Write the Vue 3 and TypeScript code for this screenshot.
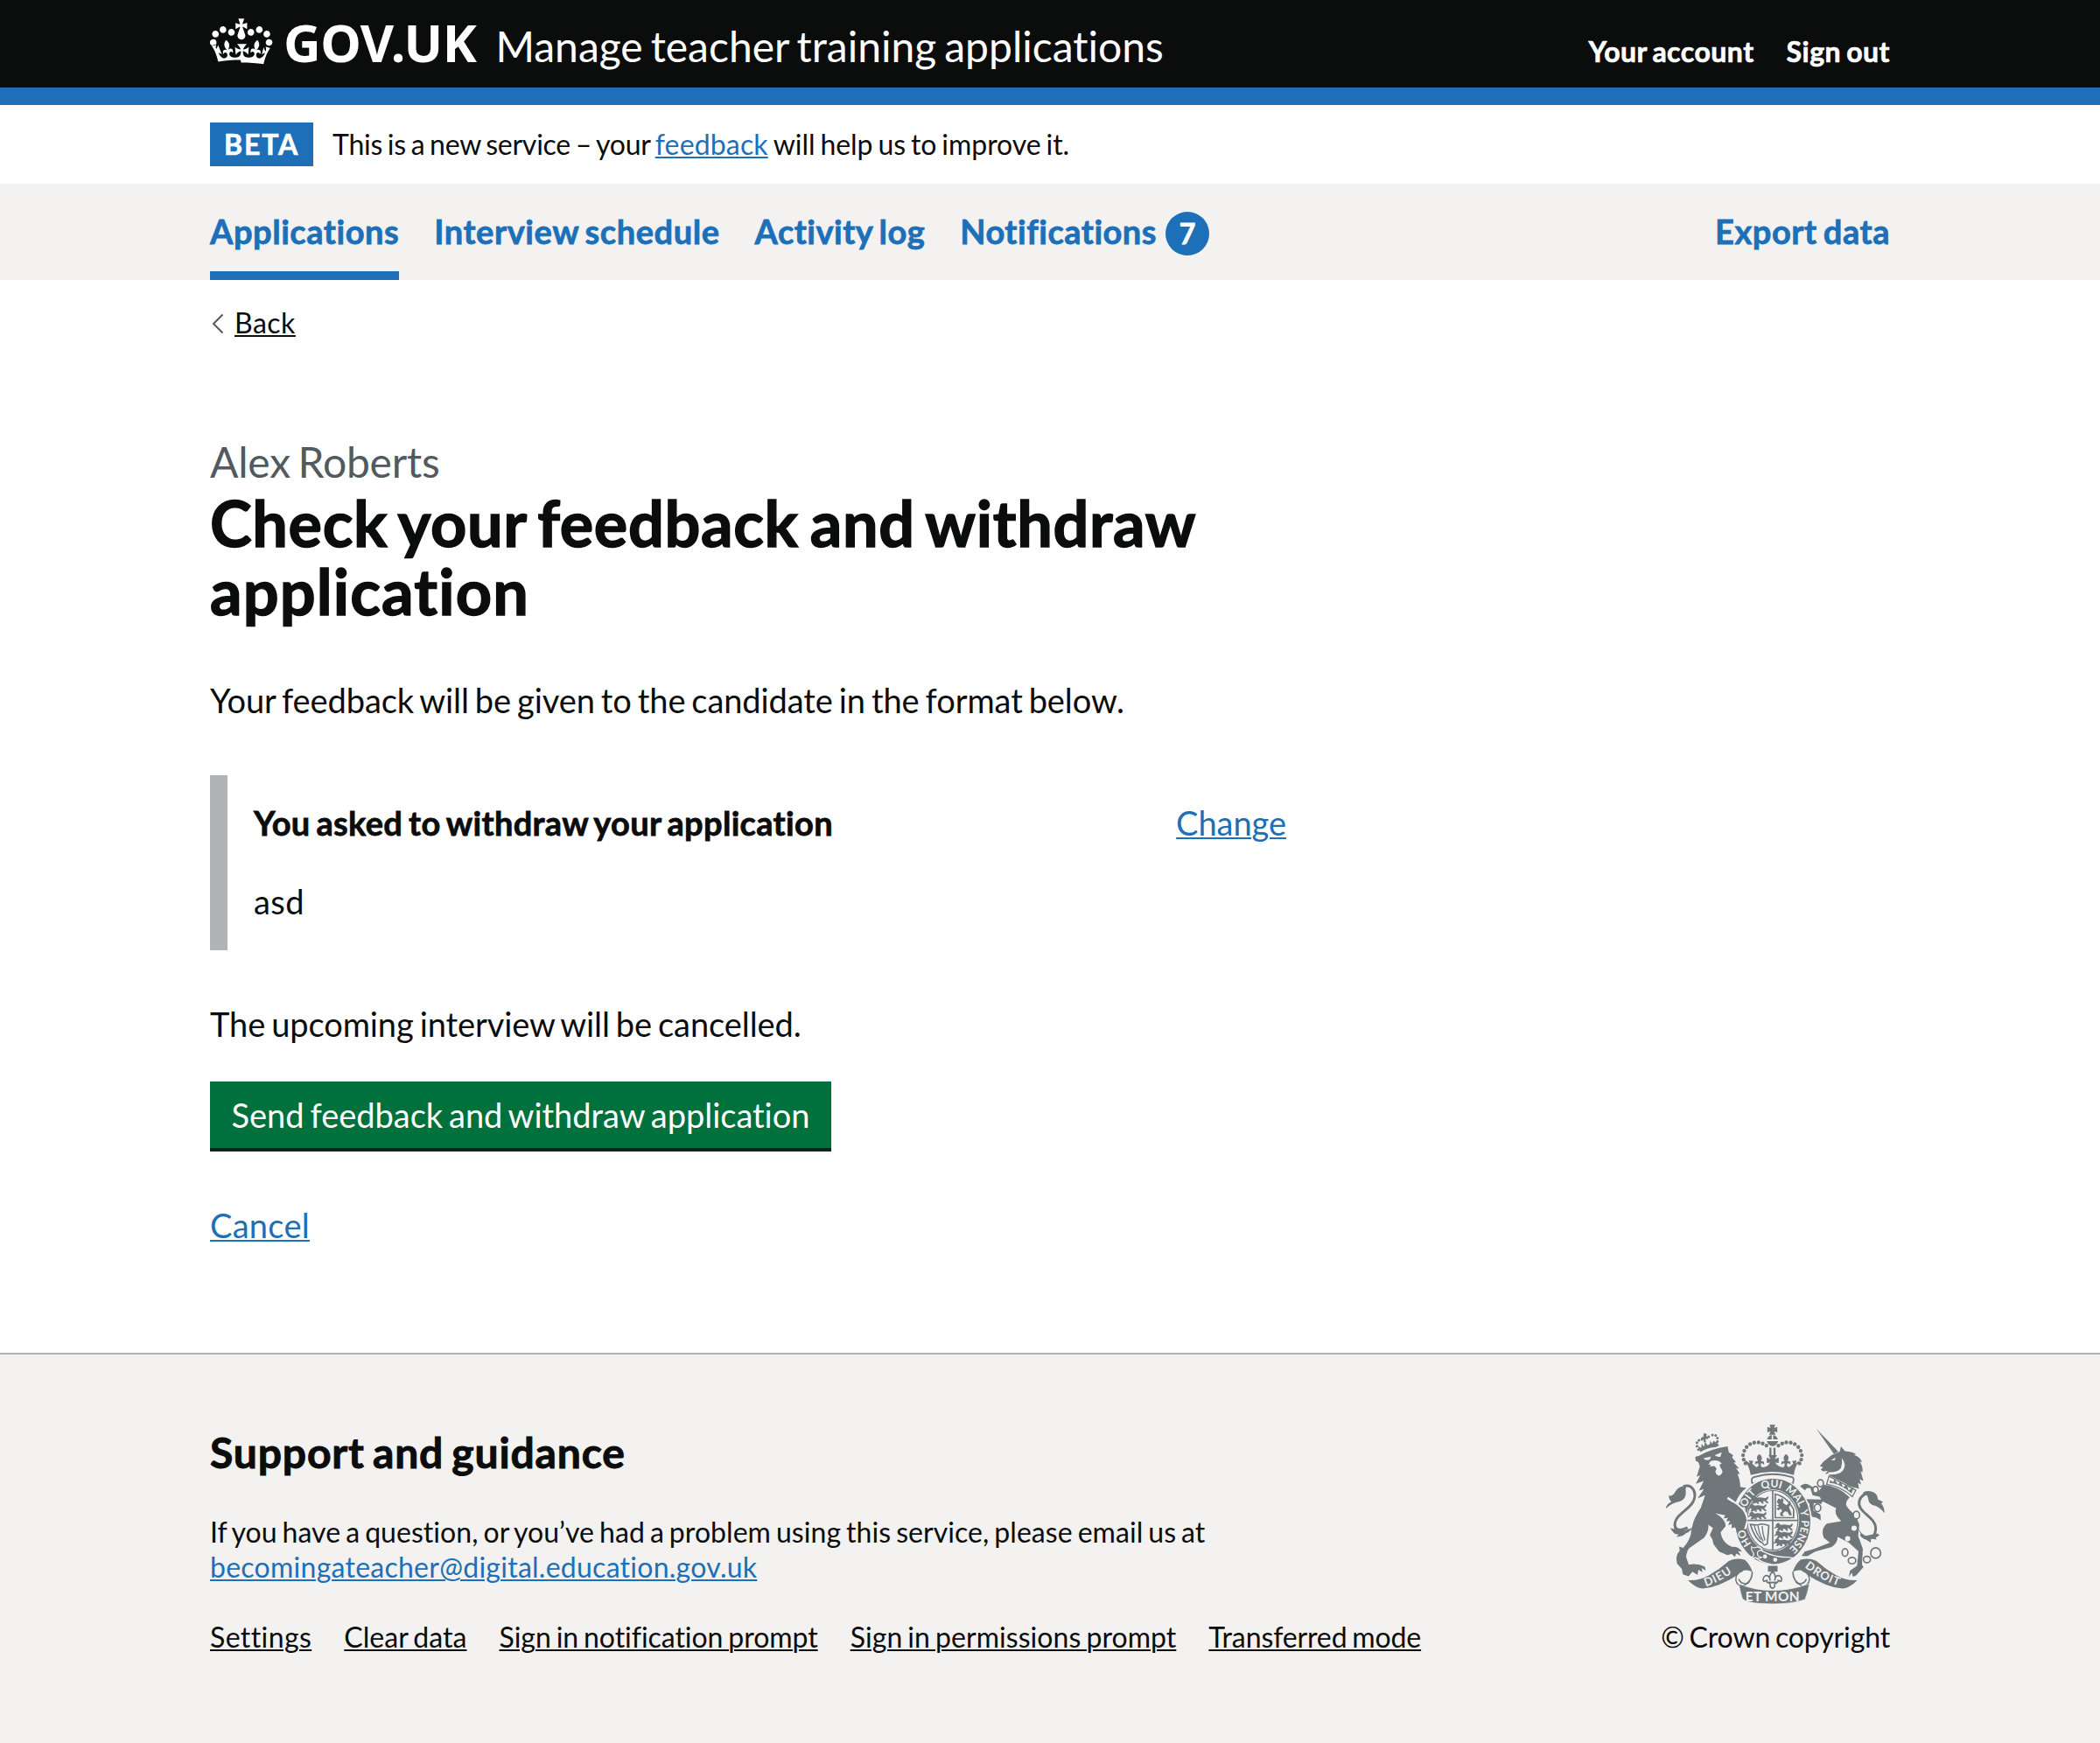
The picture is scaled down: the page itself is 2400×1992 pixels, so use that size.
<script setup lang="ts">
interface NavItem {
  label: string
  cls: string
  current?: boolean
  count?: number
}

const navItems: NavItem[] = [
  { label: 'Applications', cls: 'nav-applications', current: true },
  { label: 'Interview schedule', cls: 'nav-interviews' },
  { label: 'Activity log', cls: 'nav-activity' },
  { label: 'Notifications', cls: 'nav-notifications', count: 7 },
]

const footerLinks = [
  { label: 'Settings', cls: 'fl-settings' },
  { label: 'Clear data', cls: 'fl-clear' },
  { label: 'Sign in notification prompt', cls: 'fl-notification' },
  { label: 'Sign in permissions prompt', cls: 'fl-permissions' },
  { label: 'Transferred mode', cls: 'fl-transferred' },
]

// Pearls on the left arch of the royal crown; the right arch mirrors them.
const pearls: [number, number][] = [
  [345, 216], [339, 203], [337, 188], [341, 173], [349, 160], [361, 150], [375, 145], [390, 144], [404, 148], [417, 155],
]
const smallPearls: [number, number][] = [
  [184, 169], [179, 157], [179, 145], [186, 137], [196, 134], [219, 125], [232, 119], [243, 120], [249, 129], [249, 141], [249, 153],
]
const chain: [number, number, number, number][] = [
  [602, 284, 10, 12], [585, 306, 9, 11], [592, 368, 11, 13], [725, 393, 11, 13], [686, 521, 10, 13],
  [710, 549, 13, 11], [761, 545, 12, 11], [791, 523, 17, 18],
]
const lions: [number, number][] = [
  [364, 326], [357, 353], [357, 380], [447, 419], [447, 445], [444, 471],
]
</script>

<template>
  <div class="page">
    <header class="header">
      <div class="container header-row">
        <svg class="crown" viewBox="0 0 36 32" aria-hidden="true">
          <path
            fill="#fff"
            fill-rule="evenodd"
            d="M6.7 12.2c1 .4 2.1-.1 2.5-1s-.1-2.1-1-2.5c-1-.4-2.1.1-2.5 1-.4 1 0 2.1 1 2.5m-4.3 2.5c1 .4 2.1-.1 2.5-1s-.1-2.1-1-2.5c-1-.4-2.1.1-2.5 1-.5 1 0 2.1 1 2.5m-1.3 4.8c1 .4 2.1-.1 2.5-1 .4-1-.1-2.1-1-2.5-1-.4-2.1.1-2.5 1-.4 1 0 2.1 1 2.5m10.4-5.8c1 .4 2.1-.1 2.5-1s-.1-2.1-1-2.5c-1-.4-2.1.1-2.5 1s0 2.1 1 2.5m17.4-1.5c-1 .4-2.1-.1-2.5-1s.1-2.1 1-2.5c1-.4 2.1.1 2.5 1 .5 1 0 2.1-1 2.5m4.3 2.5c-1 .4-2.1-.1-2.5-1s.1-2.1 1-2.5c1-.4 2.1.1 2.5 1 .5 1 0 2.1-1 2.5m1.3 4.8c-1 .4-2.1-.1-2.5-1-.4-1 .1-2.1 1-2.5 1-.4 2.1.1 2.5 1 .4 1 0 2.1-1 2.5m-10.4-5.8c-1 .4-2.1-.1-2.5-1s.1-2.1 1-2.5c1-.4 2.1.1 2.5 1s0 2.1-1 2.5m-5.3-4.9l2.4 1.3V6.5l-2.4.8c-.1-.1-.1-.2-.2-.2s1-3 1-3h-3.4l1 3c-.1.1-.2.1-.2.2-.1.1-2.4-.7-2.4-.7v3.5L17 8.800c.1.1.1.2.2.3l-1.4 4.2c-.1.2-.1.4-.1.6 0 1.1.8 2 1.9 2.2h.7c1-.2 1.9-1.1 1.9-2.1 0-.2 0-.4-.1-.6l-1.4-4.2c-.1-.2 0-.2.1-.3m-1 20.3c4.6 0 8.9.3 12.8.9 1.1-4.6 2.4-7.2 3.8-9.1l-2.6-.9c.3 1.3.3 1.9 0 2.8-.4-.4-.8-1.2-1.1-2.4l-1.2 4.2c.8-.5 1.4-.9 2-.9-1.2 2.6-2.7 3.2-3.6 3-1.2-.2-1.7-1.3-1.5-2.2.3-1.3 1.6-1.6 2.2-.1 1.2-2.4-.8-3.1-2.1-2.4 1.9-1.9 2.2-3.6.6-5.7-2.2 1.7-2.2 3.3-1.2 5.6-1.3-1.5-3.3-.7-2.5 1.7.9-1.4 2.1-.5 2 .8-.2 1.2-1.7 2.1-3.6 1.9-2.8-.2-3-2.2-3-3.7.7-.1 1.9.5 3 2l.4-4.4c-1.1 1.2-2.2 1.4-3.3 1.4.4-1.2 2.1-3.1 2.1-3.1h-5.5s1.8 2 2.1 3.1c-1.1 0-2.2-.2-3.3-1.4l.4 4.4c1.1-1.5 2.3-2.1 3-2-.1 1.6-.2 3.5-3 3.7-1.9.2-3.5-.7-3.6-1.9-.2-1.3 1-2.2 1.9-.8.7-2.4-1.3-3.1-2.6-1.7 1-2.3.9-4-1.2-5.6-1.6 2.1-1.3 3.8.6 5.7-1.3-.7-3.2 0-2.1 2.4.6-1.5 1.9-1.1 2.2.1.2.9-.3 1.9-1.5 2.2-.9.2-2.4-.5-3.5-3 .6 0 1.2.3 2 .9L4.6 19.2c-.3 1.1-.7 1.9-1.1 2.3-.3-.8-.2-1.5 0-2.8l-2.6.9c1.4 1.9 2.7 4.5 3.8 9.1 3.8-.6 8.2-.9 12.7-.9"
          />
        </svg>
        <span class="logotype">GOV.UK</span>
        <span class="service-name">Manage teacher training applications</span>
        <nav class="account-nav">
          <a class="account-link">Your account</a>
          <a class="account-link">Sign out</a>
        </nav>
      </div>
    </header>

    <div class="container phase-banner">
      <strong class="tag">BETA</strong>
      <span class="phase-lead">This is a new service – your</span>
      <a class="link phase-link">feedback</a>
      <span class="phase-tail">will help us to improve it.</span>
    </div>

    <nav class="primary-nav">
      <div class="container nav-row">
        <a
          v-for="item in navItems"
          :key="item.label"
          class="nav-item"
          :class="[item.cls, { current: item.current }]"
        >{{ item.label }}<span v-if="item.count" class="count">{{ item.count }}</span></a>
        <a class="nav-item nav-export">Export data</a>
      </div>
    </nav>

    <main class="container main">
      <a class="back-link">
        <svg class="chevron" viewBox="0 0 14 24" aria-hidden="true">
          <path d="M12.500 1.500 2 12l10.500 10.500" fill="none" stroke="#505a5f" stroke-width="2" />
        </svg>
        <span class="back-text">Back</span>
      </a>

      <span class="caption">Alex Roberts</span>
      <h1 class="heading">
        <span class="heading-first">Check your feedback and withdraw</span>
        <span class="heading-second">application</span>
      </h1>

      <p class="body intro">Your feedback will be given to the candidate in the format below.</p>

      <div class="inset">
        <div class="inset-text">
          <h2 class="inset-title">You asked to withdraw your application</h2>
          <p class="reason">asd</p>
        </div>
        <a class="link change">Change</a>
      </div>

      <p class="body upcoming">The upcoming interview will be cancelled.</p>
      <button class="button" type="button">Send feedback and withdraw application</button>
      <p class="cancel"><a class="link">Cancel</a></p>
    </main>

    <footer class="footer">
      <div class="container footer-row">
        <div class="footer-main">
          <h2 class="footer-title">Support and guidance</h2>
          <p class="footer-text">
            If you have a question, or you’ve had a problem using this service, please email us at<br />
            <a class="link email">becomingateacher@digital.education.gov.uk</a>
          </p>
          <div class="footer-links">
            <a v-for="l in footerLinks" :key="l.label" class="footer-link" :class="l.cls">{{ l.label }}</a>
          </div>
        </div>

        <div class="footer-crest">
          <svg class="crest" viewBox="70 80 755 620" aria-hidden="true">
            <defs>
              <path id="garter" d="M438 529C384 529 339 476 339 413S384 298 438 298 537 350 537 413 492 529 438 529" />
              <path id="dieu" d="M209 637Q264 621 330 568" />
              <path id="droit" d="M547 571Q612 622 676 639" />
              <path id="lion-passant" d="M2 6l6-4 5-1 3 5 6 2 8-2 12 2 8 1 7-6 4 2-4 8-5 4 9 7-6 3-9-8-5 1 3 7-6 1-5-7-8 1 3 6-6 1-4-5-7 4-6-1 5-8-6-2-5 4-3-3 6-5z" />
              <g id="scroll">
                <path d="M148 616Q186 619 222 598T288 550Q314 538 342 546 360 560 369 588 340 572 318 598 252 641 198 645 174 642 148 616z" />
                <path d="M333 640C340 632 370 622 368 587" fill="none" stroke="#6f777b" stroke-width="5" />
                <path d="M327 636C303 622 310 590 336 584M322 612C330 631 352 632 359 620" fill="none" stroke="#6f777b" stroke-width="4.500" />
              </g>
            </defs>

            <g fill="#6f777b">
              <!-- crown above the shield -->
              <path d="M428 84h19l-4 11 11-4v19l-11-4 5 12h-22l5-12-11 4V91l11 4z" />
              <path d="M419 134q4-13 16-15v15zM440 119q13 3 16 15h-16zM418 140h39q-4 16-19 17-15-1-20-17z" />
              <path d="M427 162h7v29h-7zM441 162h7v29h-7z" />
              <g v-for="(p, i) in pearls" :key="'p' + i">
                <circle :cx="p[0]" :cy="p[1]" r="6.500" />
                <circle :cx="875 - p[0]" :cy="p[1]" r="6.500" />
              </g>
              <path d="M346 206l14 10-3-10 15 2-4 9 14 12q12-2 6-13-7-2-9 5-5-14 9-13-9-15 5-24 14 11 5 24 15 0 10 13-5-8-10-4-2 14 10 12 14-2 21-16l-11 2v-19l13 6-7-14h29l-8 14 14-6v19l-12-2q8 14 22 16 12 2 10-12-5-4-10 4-5-13 10-13-9-13 5-24 14 9 5 24 14-1 9 13-2-7-9-5-6 11 6 13l14-12-4-9 15-2-3 10 14-10q-18 22-20 50-74-22-148 0-4-28-20-50z" />
              <path d="M378 262Q438 244 500 262 515 262 507 286 438 262 369 286 361 264 378 262z" fill="#f3f2f1" stroke="#6f777b" stroke-width="5.500" />

              <!-- lion and its crown -->
              <circle v-for="(p, i) in smallPearls" :key="'s' + i" :cx="p[0]" :cy="p[1]" r="4.500" />
              <path d="M202 113l11 2-2 8 6 2-1 8-8-1 2 11-7 1-2-10-7 2-1-8 8-3zM182 157l12 6 1-14 8 10 4-17 8 12 8-4 2-12 6 11 5-11 7 6 8-9-5 25q-33 2-55 17z" />
              <path d="M173 194L188 189Q232 165 284 158L288 178 303 188 299 196 313 212 305 213 324 234 313 232 326 252 318 252Q328 274 327 296L348 300Q324 318 312 348L334 374Q346 390 349 411L341 439 332 442 325 433 314 441 307 434 298 438 299 423 286 428 292 413 279 414 285 403 270 404 276 394 242 387Q278 407 277 431L260 452Q264 479 283 493L300 502Q324 501 333 519L320 516 329 532 313 525 309 537 298 526 283 530 255 518 236 493Q234 475 223 461L234 437 218 426Q220 449 203 471L156 504Q144 511 142 537L151 563Q181 557 206 570L209 583 195 574 198 589 184 580 181 598 164 587 150 603 131 596 127 577 111 559Q104 530 120 515L118 501 132 505Q159 475 160 443L165 423Q169 404 192 368L207 325 181 336 203 304 186 309 202 276 175 286 190 257 178 262 189 226 183 211 175 208z" />
              <path d="M201 198l26-5-4 10q-14 6-22-5zM240 188l24-10-5 16q-14 1-19-6zM221 212q13-10 34-3l9 7-8 5 4 10-5 2 5-2q10 12 4 20-10 14-20 0-4-10 3-16l-8-10-16 2 4-6-10-2 7-5z" fill="#f3f2f1" />
              <path d="M72 371Q75 355 91 348 83 338 82 326 95 331 106 311 117 292 142 294 139 305 141 317 141 337 122 346 92 352 72 371z" />
              <path d="M132 295C166 284 181 320 165 349S97 395 104 432Q110 453 147 436" fill="none" stroke="#6f777b" stroke-width="9" />
              <path d="M88 437l14 5-4-17 14 16q20 11 51-5-7 16-23 20-7 10-32 12 7-5 8-9-17 2-28-22z" />

              <!-- unicorn -->
              <path d="M588 98L663 176 648 184z" />
              <path d="M600 225L612 210 640 188 668 176 672 158 686 174Q714 176 724 185L717 187Q739 194 744 213L736 209Q750 232 745 248L739 242 749 276 736 270 741 288 730 283 734 303 724 300Q703 298 685 284L633 258 630 250 618 253 627 242 610 243 603 237 611 230z" />
              <path d="M675 198q18 22 4 42-12 16-48 14l-3-8q34 2 44-14 6-17 3-34z" fill="#f3f2f1" />
              <path d="M638 204l16-8-4 10z" fill="#f3f2f1" />
              <path d="M631 260l92 48-12 22q-40-36-88-42z" fill="#f3f2f1" stroke="#6f777b" stroke-width="4" />
              <path d="M635 273l10 8 5-11 12 19 9-11 8 20 13-10 6 20 18-10-8 21q-36-33-75-37z" />
              <path d="M532 294Q546 281 560 288L597 310 613 289Q661 293 702 332 688 345 690 359 699 376 721 392L735 425 731 465 747 508 744 562 749 571 724 600 713 604 709 590 699 606 703 583 727 567 732 517 699 487 661 468Q660 490 640 502L584 518 557 534 537 533 548 518 581 508 634 487Q624 480 613 470 602 440 624 422L673 414Q646 388 656 370L609 346 605 355 579 352 578 377 602 391 603 411 588 402 574 399 558 375 565 354 548 345 550 338 604 340 600 331 575 325 567 300 555 301 549 308z" />
              <path d="M740 459C754 482 791 478 791 438S724 383 735 344Q743 318 773 317" fill="none" stroke="#6f777b" stroke-width="9" />
              <path d="M746 317Q757 307 776 312 798 317 799 340L816 347 810 353Q822 368 821 386 808 369 789 361 767 358 765 336 763 321 746 317zM728 425Q736 456 756 464L797 456 804 463 791 470 794 477 775 474 774 487 759 478Q738 468 728 425z" />
              <circle cx="717" cy="438" r="9" fill="#f3f2f1" />
              <circle cx="695" cy="474" r="9" fill="#f3f2f1" />
              <ellipse
                v-for="(c, i) in chain"
                :key="'c' + i"
                :cx="c[0]"
                :cy="c[1]"
                :rx="c[2]"
                :ry="c[3]"
                :fill="i < 4 ? '#f3f2f1' : 'none'"
                stroke="#6f777b"
                stroke-width="5"
              />

              <!-- garter -->
              <ellipse cx="439" cy="415" rx="131" ry="149" fill="#6f777b" stroke="#f3f2f1" stroke-width="5" />
              <ellipse cx="438" cy="411" rx="91" ry="106" fill="#f3f2f1" />
              <ellipse cx="438" cy="411" rx="87" ry="102" fill="none" stroke="#6f777b" stroke-width="3.500" />
              <g class="garter-text">
                <text><textPath href="#garter" startOffset="12.500%">HO</textPath></text>
                <text><textPath href="#garter" startOffset="29%">SOIT</textPath></text>
                <text><textPath href="#garter" startOffset="44.500%">QUI</textPath></text>
                <text><textPath href="#garter" startOffset="56.500%">MAL</textPath></text>
                <text><textPath href="#garter" startOffset="69.500%">Y</textPath></text>
                <text><textPath href="#garter" startOffset="74.500%">PENSE</textPath></text>
              </g>

              <!-- the lion's forepaw rests over the garter -->
              <path d="M284 334Q316 354 336 374 350 390 351 411L343 441" fill="none" stroke="#f3f2f1" stroke-width="8" />
              <path d="M300 348Q318 358 334 374 346 390 349 411L341 439 332 442 325 433 314 441 307 434 298 438 299 423 290 400z" />

              <!-- quarters -->
              <path d="M436 309h5v204h-5zM351 409h175v5H351z" />
              <use v-for="(l, i) in lions" :key="'l' + i" href="#lion-passant" :x="l[0]" :y="l[1]" />
              <path d="M447 321q39 8 63 52v29h-63z" fill="none" stroke="#6f777b" stroke-width="5" />
              <path d="M458 336l8 4 5-6 5 9-3 8 12 8 10-8 1-9 5 12-7 12 6 14 4 14-9 0-6-12-9-2-9 9 7 7-12 1-3-10 8-8-6-8-7 6-7-6 9-5-8-6 8-4-8-7z" />
              <path d="M362 425q20 3 29 1 10-6 34 3l-5 62q-12 10-15-1-28-14-43-65z" fill="none" stroke="#6f777b" stroke-width="5" />
              <path d="M375 428q6 27 23 49M388 429q4 30 18 54M402 430q2 28 10 50" fill="none" stroke="#6f777b" stroke-width="4" />

              <!-- buckle and strap -->
              <path d="M376 506l18 5q40 26 96 26l20 3q-42 26-76 22-34-6-52-22l-9-2z" stroke="#f3f2f1" stroke-width="4" />
              <path d="M366 502q8 6 18 0 16 2 18 12-16-2-16 10t14 14q-12 6-22 0-6 4-10-2 8-4 4-14-8-8-6-20z" stroke="#f3f2f1" stroke-width="3.500" />
              <circle cx="412" cy="535" r="7" fill="#f3f2f1" />
              <circle cx="447" cy="546" r="7" fill="#f3f2f1" />
              <path d="M422 567h33v20h-33z" />
              <path d="M438 585q-15 16-8 32-3-20-17-16-12 8-5 19l10-3q-2 8 10 8l2 9q-2 7 8 10 9-3 7-10l2-9q11 0 10-8l10 3q6-12-5-19-15-4-17 16 7-16-7-32z" fill="#f3f2f1" stroke="#6f777b" stroke-width="5" />
              <path d="M423 621h30v6h-30z" />

              <!-- motto scroll -->
              <use href="#scroll" />
              <use href="#scroll" transform="translate(876 0) scale(-1 1)" />
              <path d="M322 628Q375 651 438 651T564 628Q558 660 549 682 508 697 438 697 350 697 335 680 328 660 322 628z" stroke="#f3f2f1" stroke-width="2" />
              <g class="motto">
                <text><textPath href="#dieu">DIEU</textPath></text>
                <text><textPath href="#droit">DROIT</textPath></text>
                <text x="438" y="688" text-anchor="middle" class="et-mon">ET MON</text>
              </g>
            </g>
          </svg>
          <a class="copyright">© Crown copyright</a>
        </div>
      </div>
    </footer>
  </div>
</template>

<style>
body {
  margin: 0;
}
</style>

<style scoped>
.page {
  display: flex;
  flex-direction: column;
  min-height: 1992px;
  background: #fff;
  color: #0b0c0c;
  font-family: Lato, "Liberation Sans", sans-serif;
  font-size: 38px;
  font-variant-ligatures: none;
  line-height: 50px;
}

.page * {
  word-spacing: -0.07em;
}

.container {
  box-sizing: border-box;
  width: 1920px;
  margin: 0 auto;
}

h1,
h2,
p {
  margin: 0;
}

h1,
h2,
.tag,
.account-link,
.nav-item {
  font-weight: 700;
  -webkit-text-stroke: 0.02em currentColor;
}

.link {
  color: #1d70b8;
}

.link,
.footer-link,
.back-text {
  text-decoration: underline;
  text-decoration-thickness: 2px;
  text-underline-offset: 2px;
}

/* Header */
.header {
  box-sizing: border-box;
  height: 120px;
  background: #0b0c0c;
  border-bottom: 20px solid #1d70b8;
  color: #fff;
}

.header-row {
  display: flex;
  align-items: baseline;
  padding-top: 18px;
}

.crown {
  flex: none;
  align-self: flex-start;
  width: 72px;
  height: 64px;
  margin-top: -5px;
}

.logotype {
  margin-left: 12px;
  font: 700 59px/60px "Noto Sans", sans-serif;
  letter-spacing: -0.5px;
}

.service-name {
  margin-left: 22px;
  font-size: 48px;
  line-height: 60px;
  letter-spacing: 0.01px;
}

.account-nav {
  display: flex;
  gap: 37px;
  margin-left: auto;
}

.account-link {
  font-size: 32px;
  line-height: 40px;
  letter-spacing: 0.5px;
}

/* Phase banner */
.phase-banner {
  display: flex;
  height: 90px;
  padding-top: 20px;
  font-size: 32px;
  line-height: 50px;
}

.tag {
  box-sizing: border-box;
  height: 50px;
  padding: 0 16px;
  background: #1d70b8;
  color: #fff;
  letter-spacing: 1.85px;
}

.phase-lead {
  margin-left: 22px;
  letter-spacing: -0.23px;
}

.phase-link {
  margin-left: 5px;
  letter-spacing: 0.15px;
}

.phase-tail {
  margin-left: 6px;
  letter-spacing: -0.04px;
}

/* Primary navigation */
.primary-nav {
  height: 110px;
  background: #f3f2f1;
}

.nav-row {
  display: flex;
  gap: 40px;
}

.nav-item {
  display: flex;
  height: 110px;
  line-height: 108px;
  color: #1d70b8;
}

.nav-item.current {
  box-shadow: inset 0 -10px #1d70b8;
}

.nav-applications {
  letter-spacing: 0.55px;
}

.nav-interviews {
  letter-spacing: 0.56px;
}

.nav-activity {
  letter-spacing: 0.5px;
}

.nav-notifications {
  letter-spacing: 0.5px;
}

.nav-export {
  margin-left: auto;
  letter-spacing: 0.54px;
}

.count {
  width: 50px;
  height: 50px;
  margin: 32px 0 0 10px;
  border-radius: 50%;
  background: #1d70b8;
  color: #fff;
  font-size: 32px;
  line-height: 50px;
  letter-spacing: 0;
  text-align: center;
}

/* Main */
.main {
  display: flex;
  flex-direction: column;
  align-items: flex-start;
  height: 1226px;
  padding-top: 29px;
}

.back-link {
  display: flex;
  font-size: 32px;
  line-height: 40px;
  letter-spacing: 0.5px;
}

.chevron {
  width: 14px;
  height: 24px;
  margin: 9px 12px 0 2px;
}

.caption {
  margin-top: 109px;
  color: #505a5f;
  font-size: 48px;
  line-height: 60px;
  letter-spacing: -0.2px;
}

.heading {
  display: flex;
  flex-direction: column;
  font-size: 72px;
  line-height: 78px;
}

.heading-first {
  letter-spacing: 0.65px;
}

.heading-second {
  letter-spacing: 1.15px;
}

.body {
  letter-spacing: -0.08px;
}

.intro {
  margin-top: 61px;
}

.inset {
  box-sizing: border-box;
  display: flex;
  justify-content: space-between;
  width: 1230px;
  height: 200px;
  margin-top: 61px;
  padding: 29px 0 31px 30px;
  border-left: 20px solid #b1b4b6;
}

.inset-title {
  font-size: 38px;
  line-height: 50px;
  letter-spacing: 0.32px;
}

.reason {
  margin-top: 40px;
  letter-spacing: 0.4px;
}

.change {
  letter-spacing: -0.05px;
}

.upcoming {
  margin-top: 59px;
}

.button {
  box-sizing: border-box;
  width: 710px;
  height: 76px;
  margin: 41px 0 63px;
  padding: 0;
  border: 0;
  background: #00703c;
  box-shadow: 0 4px 0 #002d18;
  color: #fff;
  font: inherit;
  font-variant-ligatures: none;
  line-height: 75px;
  letter-spacing: -0.03px;
}

.cancel {
  letter-spacing: 0.28px;
}

/* Footer */
.footer {
  flex: 1;
  border-top: 2px solid #b1b4b6;
  background: #f3f2f1;
  font-size: 32px;
  line-height: 40px;
}

.footer-row {
  display: flex;
  justify-content: space-between;
}

.footer-main {
  padding-top: 82px;
}

.footer-title {
  font-size: 48px;
  line-height: 60px;
  letter-spacing: 0.85px;
}

.footer-text {
  margin-top: 41px;
  letter-spacing: 0.05px;
}

.email {
  letter-spacing: 0.26px;
}

.footer-links {
  display: flex;
  gap: 37px;
  margin-top: 40px;
}

.fl-settings {
  letter-spacing: 0.4px;
}

.fl-clear {
  letter-spacing: 0.06px;
}

.fl-notification {
  letter-spacing: -0.04px;
}

.fl-permissions {
  letter-spacing: 0.06px;
}

.fl-transferred {
  letter-spacing: -0.12px;
}

.footer-crest {
  display: flex;
  flex-direction: column;
  align-items: flex-end;
  padding-top: 79px;
}

.crest {
  width: 252px;
  height: 207px;
  margin-right: 5px;
}

.garter-text,
.motto {
  fill: #f3f2f1;
  font-family: Lato, sans-serif;
  font-weight: 700;
  font-size: 36px;
  -webkit-text-stroke: 1.500px #f3f2f1;
}

.motto {
  font-size: 39px;
  letter-spacing: 3px;
}

.et-mon {
  font-size: 46px;
  letter-spacing: 1px;
  word-spacing: 0;
}

.copyright {
  margin-top: 17px;
  letter-spacing: -0.13px;
}
</style>
